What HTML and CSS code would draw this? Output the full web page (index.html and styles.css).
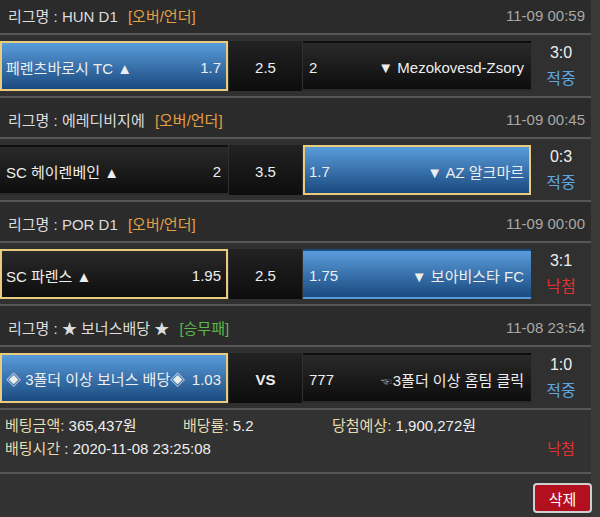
FILE: index.html
```html
<!DOCTYPE html>
<html lang="ko">
<head>
    <meta charset="UTF-8">
    <meta name="viewport" content="width=device-width, initial-scale=1.0">
    <title>배팅내역</title>
    <link rel="stylesheet" href="styles.css">
</head>
<body>
    <div class="bet-list">
        <div class="league">
            <span class="league-name">리그명 : HUN D1 <span class="type ou">[오버/언더]</span></span>
            <span class="time">11-09 00:59</span>
        </div>
        <div class="match">
            <div class="team win pick"><span>페렌츠바로시 TC ▲</span><span>1.7</span></div>
            <div class="mid">2.5</div>
            <div class="team"><span>2</span><span>▼ Mezokovesd-Zsory</span></div>
            <div class="result"><span>3:0</span><span class="hit">적중</span></div>
        </div>

        <div class="league">
            <span class="league-name">리그명 : 에레디비지에 <span class="type ou">[오버/언더]</span></span>
            <span class="time">11-09 00:45</span>
        </div>
        <div class="match">
            <div class="team"><span>SC 헤이렌베인 ▲</span><span>2</span></div>
            <div class="mid">3.5</div>
            <div class="team win pick"><span>1.7</span><span>▼ AZ 알크마르</span></div>
            <div class="result"><span>0:3</span><span class="hit">적중</span></div>
        </div>

        <div class="league">
            <span class="league-name">리그명 : POR D1 <span class="type ou">[오버/언더]</span></span>
            <span class="time">11-09 00:00</span>
        </div>
        <div class="match">
            <div class="team pick"><span>SC 파렌스 ▲</span><span>1.95</span></div>
            <div class="mid">2.5</div>
            <div class="team win"><span>1.75</span><span>▼ 보아비스타 FC</span></div>
            <div class="result"><span>3:1</span><span class="miss">낙첨</span></div>
        </div>

        <div class="league">
            <span class="league-name">리그명 : ★ 보너스배당 ★ <span class="type wdl">[승무패]</span></span>
            <span class="time">11-08 23:54</span>
        </div>
        <div class="match">
            <div class="team win pick"><span>◈ 3폴더 이상 보너스 배당◈</span><span>1.03</span></div>
            <div class="mid vs">VS</div>
            <div class="team"><span>777</span><span><span class="hand">☜</span>3폴더 이상 홈팀 클릭</span></div>
            <div class="result"><span>1:0</span><span class="hit">적중</span></div>
        </div>

        <div class="summary">
            <div class="summary-row">
                <span class="col-a"><span class="label">베팅금액:</span> 365,437원</span>
                <span class="col-b"><span class="label">배당률:</span> 5.2</span>
                <span><span class="label">당첨예상:</span> 1,900,272원</span>
            </div>
            <div class="summary-row">
                <span class="grow"><span class="label">배팅시간</span> : 2020-11-08 23:25:08</span>
                <span class="result-text miss">낙첨</span>
            </div>
        </div>

        <div class="actions">
            <button class="btn-delete">삭제</button>
        </div>
    </div>
</body>
</html>
```

FILE: styles.css
```css
body {
    margin: 0;
    background-color: #3a3a3a;
    font-family: "Liberation Sans", "Noto Sans CJK KR", sans-serif;
    font-size: 15px;
    color: #eeeeee;
    overflow: hidden;
}

.bet-list {
    width: 591px;
    margin-top: -6px;
    background-color: #313131;
}

.league {
    height: 41px;
    display: flex;
    align-items: center;
    justify-content: space-between;
    padding: 3px 6px 0 8px;
    box-sizing: border-box;
    background-color: #2b2b2b;
    border-bottom: 2px solid #565656;
    color: #dddddd;
}

.type {
    margin-left: 6px;
}

.ou {
    color: #e6a043;
}

.wdl {
    color: #5cb84a;
}

.time {
    color: #a8a8a8;
}

.match {
    display: flex;
    padding: 6px 0 5px;
    border-bottom: 2px solid #565656;
    background-color: #303030;
}

.team {
    width: 228px;
    height: 50px;
    box-sizing: border-box;
    display: flex;
    align-items: center;
    justify-content: space-between;
    padding: 2px 5px 0 4px;
    background: linear-gradient(#2a2a2a, #0d0d0d);
    border: 2px solid transparent;
    white-space: nowrap;
}

.win {
    background: linear-gradient(#599cdb, #1a4a7f);
}

.pick {
    border-color: #e9cb7e;
}

.mid {
    width: 73px;
    height: 50px;
    margin: 0 1px;
    display: flex;
    align-items: center;
    justify-content: center;
    padding-top: 2px;
    box-sizing: border-box;
    background: linear-gradient(#222222, #0d0d0d);
}

.vs {
    font-weight: bold;
}

.hand {
    font-size: 11px;
    color: #9a9a9a;
    margin-right: 1px;
}

.result {
    width: 60px;
    display: flex;
    flex-direction: column;
    align-items: center;
    justify-content: center;
    gap: 3px;
    font-size: 16px;
}

.hit {
    color: #5ea6e2;
}

.miss {
    color: #e3312f;
}

.summary {
    padding: 4px 0 12px 5px;
    border-bottom: 2px solid #565656;
    background-color: #323232;
}

.summary-row {
    display: flex;
    line-height: 23px;
}

.label {
    color: #e6dcae;
}

.col-a {
    width: 178px;
}

.col-b {
    width: 149px;
}

.grow {
    flex: 1;
}

.result-text {
    width: 60px;
    text-align: center;
}

.actions {
    display: flex;
    justify-content: flex-end;
    padding: 9px 0 20px;
    background-color: #323232;
}

.btn-delete {
    width: 59px;
    height: 30px;
    margin-right: -1px;
    background-color: #b3101f;
    border: 2px solid #cfcfcf;
    border-radius: 4px;
    color: #ffffff;
    font-family: inherit;
    font-size: 15px;
}
```
